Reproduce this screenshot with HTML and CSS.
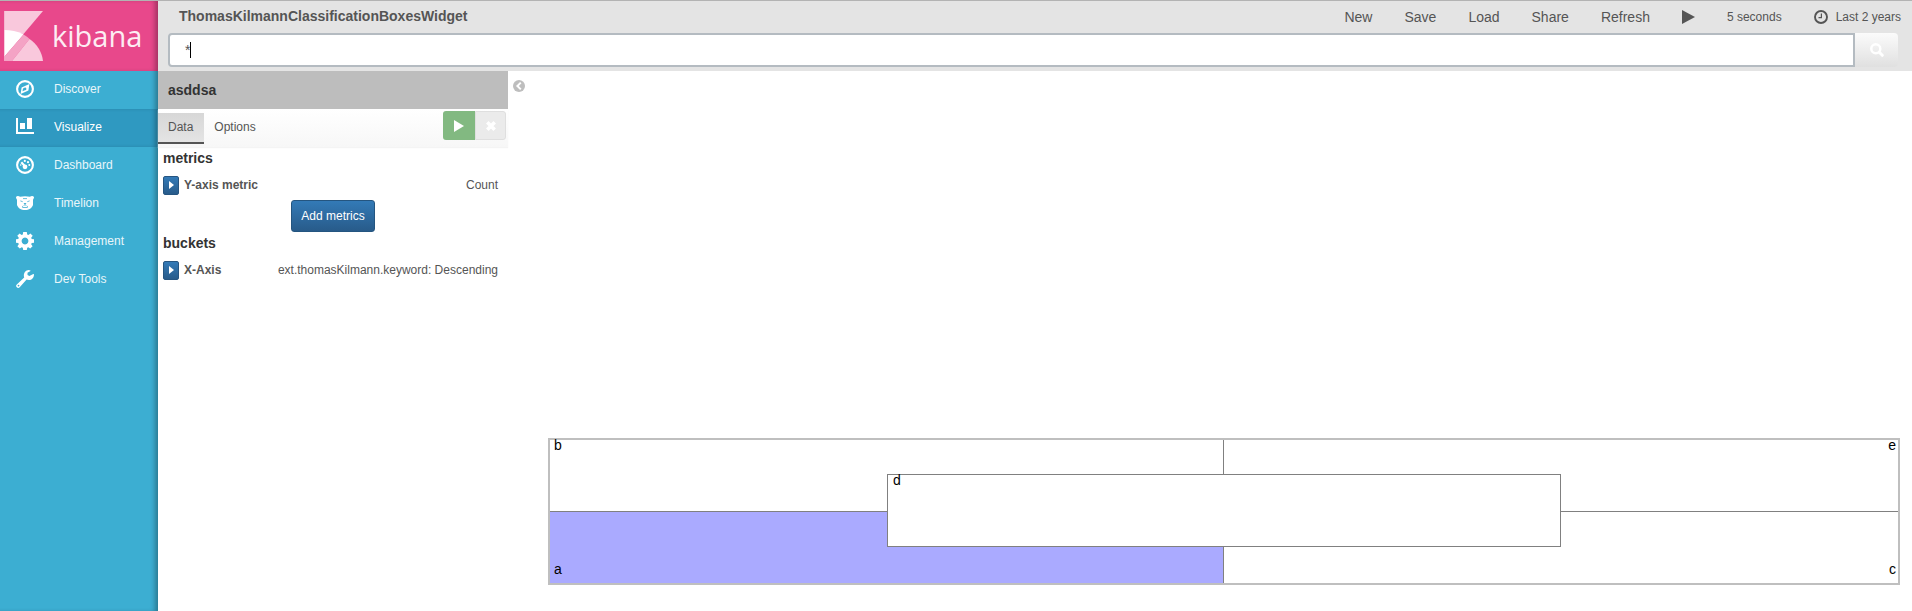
FILE: index.html
```html
<!DOCTYPE html>
<html lang="en">
<head>
<meta charset="utf-8">
<title>Kibana - Visualize</title>
<link rel="stylesheet" href="styles.css">
</head>
<body>
<div class="app">
  <nav class="sidebar">
    <a class="brand" href="#">
      <svg class="brand-mark" viewBox="0 0 39 50" aria-hidden="true">
        <path d="M0 0H39L0 46Z" fill="#f9c8dc"/>
        <path d="M0 19C7 19 13 20 19.5 23.5L0 46Z" fill="#fff"/>
        <path d="M19.500 23.500Q23 25.500 25.500 28L8 50H0V46Z" fill="#f4a3c5"/>
        <path d="M25.500 28C33 33 38 41 39 50H8Z" fill="#f9c8dc"/>
        <path d="M0 0V50H1V0Z" fill="#f2a0c2" fill-opacity=".5"/>
      </svg>
      <span class="brand-name">kibana</span>
    </a>
    <a class="nav-item" href="#">
      <svg class="nav-icon" viewBox="0 0 18 18" aria-hidden="true"><circle cx="9" cy="9" r="7.9" fill="none" stroke="#fff" stroke-width="2.1"/><path fill="#fff" fill-rule="evenodd" d="M13.4 4L12.4 10.400L4.600 14L5.600 7.600ZM9 7.500L7 8.600L6.500 11.300L9 10.300A1.400 1.400 0 0 0 9 7.500Z"/></svg>
      <span>Discover</span>
    </a>
    <a class="nav-item active" href="#">
      <svg class="nav-icon" viewBox="0 0 18 18" aria-hidden="true"><path fill="#fff" d="M0 0H2V14H18V16H0ZM4 5H9V11H4ZM11 0H16V11H11Z"/></svg>
      <span>Visualize</span>
    </a>
    <a class="nav-item" href="#">
      <svg class="nav-icon" viewBox="0 0 18 18" aria-hidden="true"><circle cx="9" cy="9" r="7.9" fill="none" stroke="#fff" stroke-width="2.1"/><path d="M5.3 6.3L9 10.3" stroke="#fff" stroke-width="2.1"/><g fill="#fff"><circle cx="9" cy="10.8" r="2.4"/><circle cx="8.8" cy="4.9" r="1.1"/><circle cx="12" cy="6.2" r="1.1"/><circle cx="13.3" cy="9" r="1"/><circle cx="4.7" cy="9" r=".8"/></g></svg>
      <span>Dashboard</span>
    </a>
    <a class="nav-item" href="#">
      <svg class="nav-icon" viewBox="0 0 18 18" aria-hidden="true"><path fill="#fff" d="M0 3C1 1.5 3 2 4 2.7C7 2 11 2 14 2.7C15 2 17 1.5 18 3C18 4.5 17.2 5 17 6V11C16 14 13 16 9 16C5 16 2 14 1 11V6C.8 5 0 4.5 0 3Z"/><path fill="none" stroke="#3caed2" stroke-width=".8" d="M7 4.6H11M4.4 6.9L6.7 7.7M13.6 6.9L11.3 7.7M9 10V12M6.5 13.3Q6.2 12.2 7.4 11.7M11.5 13.3Q11.8 12.2 10.6 11.7M6.5 13.5H11.5"/><path fill="#3caed2" d="M7.5 9H10.5L9 10.7Z"/></svg>
      <span>Timelion</span>
    </a>
    <a class="nav-item" href="#">
      <svg class="nav-icon" viewBox="0 0 18 18" aria-hidden="true"><path fill="#fff" fill-rule="evenodd" d="M7.2 0H10.8L11.2 2.4L12.4 2.9L14.4 1.5L16.7 3.8L15.2 5.7L15.7 6.9L18 7.3V10.7L15.7 11.1L15.2 12.3L16.6 14.2L14.2 16.6L12.3 15.2L11.2 15.7L10.8 18H7.2L6.8 15.7L5.7 15.2L3.8 16.6L1.4 14.2L2.8 12.3L2.3 11.1L0 10.7V7.3L2.3 6.9L2.8 5.7L1.3 3.8L3.6 1.5L5.6 2.9L6.8 2.4ZM9 5.6A3.4 3.4 0 1 0 9.01 5.6Z"/></svg>
      <span>Management</span>
    </a>
    <a class="nav-item" href="#">
      <svg class="nav-icon" viewBox="0 0 18 18" aria-hidden="true"><path fill="#fff" fill-rule="evenodd" d="M12.7 0L14.4 .4L14.5 1L11.5 2.8V5L13.4 6.1L17.3 3.9L18 4.2C18 8 15.7 10 12.9 10C12 10 11.3 9.8 10.6 9.5L3.7 17.2C2.9 18 1.8 18.2 .8 17.3C-.3 16.3 0 15.1 .8 14.4L8.2 7.4C7 4 9 .3 12.7 0ZM2.5 14.8A.8 .8 0 1 0 2.51 14.8Z"/></svg>
      <span>Dev Tools</span>
    </a>
  </nav>

  <div class="workspace">
    <header class="topbar">
      <div class="topbar-row">
        <h1 class="title">ThomasKilmannClassificationBoxesWidget</h1>
        <div class="menu">
          <button class="menu-item" type="button">New</button>
          <button class="menu-item" type="button">Save</button>
          <button class="menu-item" type="button">Load</button>
          <button class="menu-item" type="button">Share</button>
          <button class="menu-item" type="button">Refresh</button>
          <button class="menu-item" type="button" aria-label="Start auto refresh"><svg class="play-icon" viewBox="0 0 13 14" aria-hidden="true"><path fill="#555" d="M0 0L13 7L0 14Z"/></svg></button>
          <button class="menu-item small" type="button">5 seconds</button>
          <button class="menu-item small" type="button"><svg class="clock-icon" viewBox="0 0 14 14" aria-hidden="true"><circle cx="7" cy="7" r="6" fill="none" stroke="#555" stroke-width="1.9"/><path fill="none" stroke="#555" stroke-width="1.2" d="M7.4 3.5V7.6H4.5"/></svg>Last 2 years</button>
        </div>
      </div>
      <form class="search">
        <input class="search-input" type="text" value="*" aria-label="Search query">
        <span class="caret"></span>
        <button class="search-button" type="button" aria-label="Search"><svg class="search-icon" viewBox="0 0 14 14" aria-hidden="true"><circle cx="5.8" cy="5.8" r="4.5" fill="none" stroke="#fff" stroke-width="2.5"/><path stroke="#fff" stroke-width="3" stroke-linecap="round" d="M9.3 9.3L12.3 12.3"/></svg></button>
      </form>
    </header>

    <div class="content">
      <aside class="editor">
        <h2 class="index-name">asddsa</h2>
        <div class="tabs">
          <button class="tab selected" type="button">Data</button>
          <button class="tab" type="button">Options</button>
          <div class="actions">
            <button class="apply" type="button" aria-label="Apply changes"><svg class="apply-icon" viewBox="0 0 10 12" aria-hidden="true"><path fill="#fff" d="M0 0L10 6L0 12Z"/></svg></button>
            <button class="discard" type="button" aria-label="Discard changes"><svg class="discard-icon" viewBox="0 0 10 10" aria-hidden="true"><path stroke="#fff" stroke-width="3.6" d="M1.3 1.3L8.7 8.7M8.7 1.3L1.3 8.7"/></svg></button>
          </div>
        </div>
        <section class="group">
          <h3 class="group-title">metrics</h3>
          <div class="agg">
            <button class="toggle" type="button" aria-label="Expand Y-axis metric"><svg class="toggle-icon" viewBox="0 0 5 8" aria-hidden="true"><path fill="#fff" d="M0 0L5 4L0 8Z"/></svg></button>
            <span class="agg-name">Y-axis metric</span>
            <span class="agg-value">Count</span>
          </div>
          <button class="add" type="button">Add metrics</button>
        </section>
        <section class="group">
          <h3 class="group-title">buckets</h3>
          <div class="agg">
            <button class="toggle" type="button" aria-label="Expand X-Axis"><svg class="toggle-icon" viewBox="0 0 5 8" aria-hidden="true"><path fill="#fff" d="M0 0L5 4L0 8Z"/></svg></button>
            <span class="agg-name">X-Axis</span>
            <span class="agg-value">ext.thomasKilmann.keyword: Descending</span>
          </div>
        </section>
      </aside>

      <button class="collapse" type="button" aria-label="Collapse editor"><svg class="collapse-icon" viewBox="0 0 12 12" aria-hidden="true"><circle cx="6" cy="6" r="6" fill="#bebebe"/><path fill="none" stroke="#fff" stroke-width="2" d="M7.8 2.6L4.4 6L7.8 9.4"/></svg></button>

      <main class="canvas">
        <div class="boxes">
          <div class="box box-b">b</div>
          <div class="box box-e">e</div>
          <div class="box box-a">a</div>
          <div class="box box-c">c</div>
          <div class="box-d">d</div>
        </div>
      </main>
    </div>
  </div>
</div>
</body>
</html>
```

FILE: styles.css
```css
* { box-sizing: border-box; }

body {
  margin: 0;
  font-family: "Liberation Sans", Arial, sans-serif;
  font-size: 12px;
  color: #555;
  background: #fff;
}

button {
  margin: 0;
  padding: 0;
  border: 0;
  background: none;
  font: inherit;
  color: inherit;
}

h1, h2, h3 { margin: 0; font-size: 14px; }
svg { display: block; }

.app {
  display: flex;
  min-height: 100vh;
  border-top: 1px solid #b3b3b3;
}

/* Sidebar */
.sidebar {
  flex: none;
  width: 158px;
  background: #3caed2;
  box-shadow: inset -5px 0 5px -2px rgba(0, 0, 0, .3);
}

.brand {
  display: flex;
  align-items: center;
  gap: 9px;
  height: 70px;
  padding-left: 4px;
  background: #e8488b;
  box-shadow: inset -5px 0 5px -2px rgba(0, 0, 0, .3);
  color: #fff;
  text-decoration: none;
}

.brand-mark { width: 39px; height: 50px; }

.brand-name {
  font-family: "Open Sans", sans-serif;
  font-size: 29px;
  font-weight: 500;
  line-height: 40px;
  color: #fdedf3;
}

.nav-item {
  display: flex;
  align-items: center;
  gap: 20px;
  height: 38px;
  padding: 0 0 2px 16px;
  color: #e8f6fa;
  text-decoration: none;
}

.nav-item.active {
  background: #2f99c1;
  box-shadow: inset -5px 0 5px -2px rgba(0, 0, 0, .3);
  color: #fff;
}

.nav-icon { width: 18px; height: 18px; }

/* Top bar */
.workspace {
  flex: 1;
  display: flex;
  flex-direction: column;
  min-width: 0;
}

.topbar {
  height: 70px;
  padding: 0 14px 0 10px;
  background: #e4e4e4;
}

.topbar-row {
  display: flex;
  justify-content: space-between;
  height: 32px;
  padding-left: 11px;
}

.title { line-height: 31px; }
.menu { display: flex; margin-right: -3px; gap: 32px; }

.menu-item {
  display: flex;
  align-items: center;
  gap: 8px;
  height: 32px;
  font-size: 14px;
}

.menu-item.small { font-size: 12px; }
.play-icon { width: 13px; height: 14px; }
.clock-icon { width: 14px; height: 14px; }

.search {
  position: relative;
  display: flex;
  height: 34px;
}

.search-input {
  flex: 1;
  min-width: 0;
  padding: 0 15px;
  border: 2px solid #b4bbc1;
  border-radius: 4px 0 0 4px;
  font: 14px "Liberation Sans", Arial, sans-serif;
  color: #555;
}

.caret {
  position: absolute;
  left: 22px;
  top: 9px;
  width: 1px;
  height: 16px;
  background: #000;
}

.search-button {
  display: flex;
  align-items: center;
  justify-content: center;
  width: 43px;
  border-radius: 0 4px 4px 0;
  background: linear-gradient(#fbfbfb, #e0e0e0);
}

.search-icon { width: 14px; height: 14px; }

/* Editor panel */
.content { flex: 1; display: flex; }
.editor { flex: none; width: 350px; }

.index-name {
  height: 38px;
  padding-left: 10px;
  background: #bdbdbd;
  line-height: 38px;
  color: #333;
}

.tabs {
  display: flex;
  height: 38px;
  padding: 2px 2px 3px 0;
  background: linear-gradient(#fff, #f7f7f7);
  box-shadow: 0 1px 1px #f4f4f4;
}

.tab {
  height: 31px;
  margin-top: 2px;
  padding: 0 10px 2px;
  border-bottom: 2px solid transparent;
}

.tab.selected {
  padding-right: 11px;
  border-bottom-color: #555;
  background: linear-gradient(#d7d7d7, #e4e4e4);
}

.actions { display: flex; height: 29px; margin-left: auto; }

.apply, .discard {
  display: flex;
  align-items: center;
  justify-content: center;
}

.apply { width: 32px; border-radius: 3px 0 0 3px; background: #82b981; }
.discard { width: 31px; border: 1px solid #dfdfdf; border-radius: 0 3px 3px 0; background: #ebebeb; }
.apply-icon { width: 10px; height: 12px; }
.discard-icon { width: 10px; height: 10px; }

.group { padding: 0 5px; }
.group-title { line-height: 23px; color: #333; }

.agg {
  display: flex;
  align-items: center;
  gap: 5px;
  height: 30px;
  padding-right: 5px;
}

.toggle {
  display: flex;
  align-items: center;
  justify-content: center;
  width: 16px;
  height: 19px;
  border: 1px solid #265581;
  border-radius: 2px;
  background: linear-gradient(#337ab7, #285b8a);
}

.toggle-icon { width: 5px; height: 8px; }
.agg-name { font-weight: bold; }
.agg-value { margin-left: auto; }

.add {
  display: block;
  height: 32px;
  margin: 0 auto;
  padding: 0 9px;
  border: 1px solid #245580;
  border-radius: 3px;
  background: linear-gradient(#337ab7, #285b8a);
  color: #fff;
}

.collapse { align-self: flex-start; padding: 9px 5px; }
.collapse-icon { width: 12px; height: 12px; }

/* Visualization */
.canvas {
  flex: 1;
  display: flex;
  align-items: flex-end;
  padding: 0 12px 26px 18px;
}

.boxes {
  position: relative;
  flex: 1;
  display: grid;
  grid-template-columns: 1fr 1fr;
  grid-template-rows: 72px 71px;
  border: 2px solid #bfbfbf;
  color: #000;
  font-size: 14px;
  line-height: 10px;
}

.box { display: flex; padding: 0 4px; }
.box-b, .box-a { border-right: 1px solid #808080; }
.box-b, .box-e { border-bottom: 1px solid #808080; }
.box-a, .box-c { align-items: flex-end; padding-bottom: 9px; }
.box-e, .box-c { justify-content: flex-end; padding-right: 2px; }
.box-a { background: #aaf; }

.box-d {
  position: absolute;
  left: 25%;
  top: 24%;
  width: 50%;
  height: 73px;
  padding: 0 5px;
  border: 1px solid #808080;
  background: #fff;
}
```
